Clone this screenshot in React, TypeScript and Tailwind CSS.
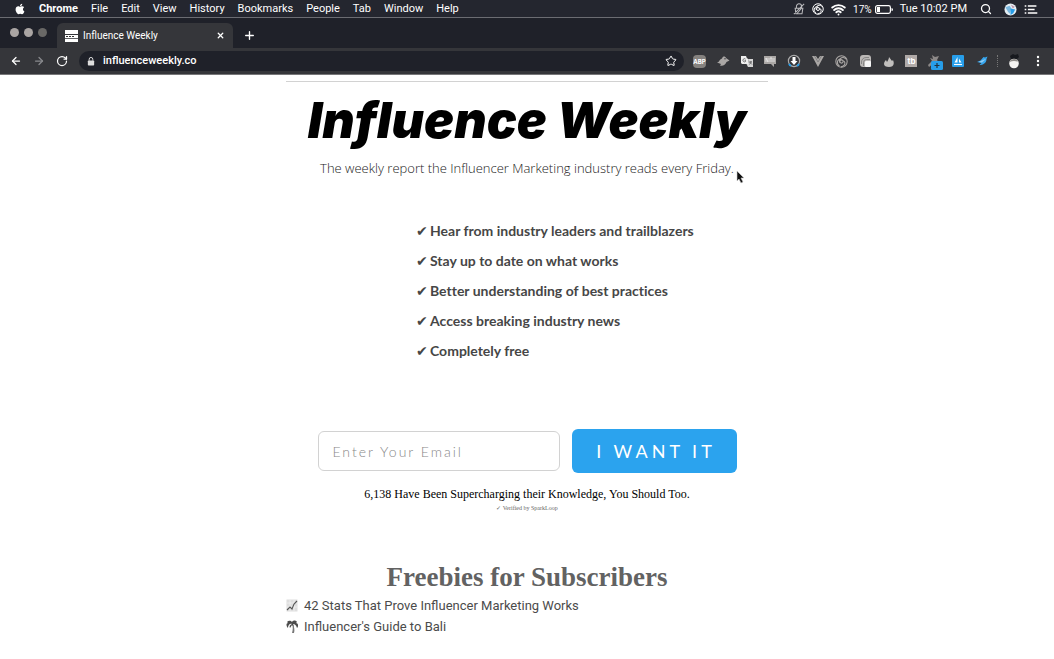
import type { ReactNode } from 'react';
import { FaApple } from 'react-icons/fa';
import { ArrowLeft, ArrowRight, RotateCw, Plus, X, Search, Star, Wifi } from 'lucide-react';

const menus = ['File', 'Edit', 'View', 'History', 'Bookmarks', 'People', 'Tab', 'Window', 'Help'];
const benefits = [
  'Hear from industry leaders and trailblazers',
  'Stay up to date on what works',
  'Better understanding of best practices',
  'Access breaking industry news',
  'Completely free',
];

function Knot({ className }: { className: string }) {
  return (
    <svg viewBox="0 0 16 16" className={className} fill="none" stroke="currentColor" strokeWidth="1.3" aria-hidden="true">
      <circle cx="8" cy="8" r="7" />
      <path d="M8 5.500c-2-1-4.500 0-5 2.500-.4 2 .5 4 2.500 5.500" />
      <path d="M5.800 9.200c-1-2-.2-4.800 2.200-5.800 2-.8 4.200-.2 5.800 1.800" />
      <path d="M10.200 7c2.200 1 2.600 3.600 1.200 5.400-1 1.300-2.400 2-4 2.200" />
      <circle cx="8" cy="8" r="2" />
    </svg>
  );
}

function MenuBar() {
  return (
    <header className="flex h-[17px] items-center justify-between bg-[#24262f] pt-px pr-4 pl-[14px] font-[Roboto] text-[11px] text-white">
      <nav className="flex items-center gap-[13px]" aria-label="Application menu">
        <FaApple className="mb-px size-3" aria-hidden="true" />
        <a href="#chrome" className="font-bold">Chrome</a>
        {menus.map((m) => (
          <a key={m} href={'#' + m.toLowerCase()}>{m}</a>
        ))}
      </nav>
      <div className="flex items-center gap-[7px]">
        <svg viewBox="0 0 14 14" className="size-3" fill="none" stroke="#b9b9bc" strokeWidth="1.200" aria-hidden="true">
          <path d="M4 6V4a3 3 0 0 1 6 0v2M2.500 6h9l-1 6.500h-7zM1 13 13 1M5 12l5-6" />
        </svg>
        <Knot className="size-3" />
        <Wifi className="size-[15px]" strokeWidth={3} aria-hidden="true" />
        <div className="flex items-center gap-[3px]">
          <span className="text-[10px]">17%</span>
          <svg viewBox="0 0 18 9" className="h-[9px] w-[18px]" aria-hidden="true">
            <rect x=".6" y=".6" width="14.800" height="7.800" rx="1.800" fill="none" stroke="#fff" strokeWidth="1.200" />
            <rect x="2" y="2" width="3" height="5" fill="#fff" />
            <path d="M16.500 3v3a1.500 1.500 0 0 0 0-3" fill="#fff" />
          </svg>
        </div>
        <time>Tue 10:02 PM</time>
        <Search className="ml-[6px] size-3" strokeWidth={2.500} aria-hidden="true" />
        <svg viewBox="0 0 14 14" className="ml-[5px] size-[13px]" aria-hidden="true">
          <circle cx="7" cy="7" r="6.500" fill="#e4edf2" />
          <path d="M1.500 4.500 6 3l2 3-2 5.500L4 9z" fill="#7ab7df" />
          <path d="m7 6 5 1-2 4-3 2z" fill="#269de8" />
          <path d="m7.500 2 4 2-2 2z" fill="#bd95ad" />
        </svg>
        <svg viewBox="0 0 14 10" className="h-[9px] w-[14px]" stroke="#fff" strokeWidth="1.700" aria-hidden="true">
          <path d="M0 1.200h1.800M3.500 1.200H13M0 5h1.800M3.500 5H11M0 8.800h1.800M3.500 8.800H14" />
        </svg>
      </div>
    </header>
  );
}

function TabStrip() {
  return (
    <div className="flex h-[31px] items-end border-t border-[#6b6c72] bg-[#1f2129] pl-[10px] text-white">
      <div className="mb-[11px] flex gap-[5px] self-end">
        <span className="size-[9px] rounded-full bg-[#aaa5a3]" />
        <span className="size-[9px] rounded-full bg-[#aaa5a3]" />
        <span className="size-[9px] rounded-full bg-[#696866]" />
      </div>
      <div className="ml-[10px] flex h-[25px] w-44 items-center rounded-t-md bg-[#35363a] pr-2 pl-2">
        <svg viewBox="0 0 13 12" className="h-3 w-[13px]" aria-hidden="true">
          <rect width="13" height="12" fill="#fff" />
          <path d="M0 4.500h13" stroke="#35363a" strokeWidth="1" />
          <path d="M1 6.500h9" stroke="#333" strokeWidth="1" strokeDasharray="2 1" />
          <path d="M0 8.500h13" stroke="#35363a" strokeWidth=".8" />
        </svg>
        <span className="ml-[5px] flex-1 font-[Roboto] text-[10px]">Influence Weekly</span>
        <button type="button" aria-label="Close tab"><X className="size-[9px]" strokeWidth={3.500} /></button>
      </div>
      <button type="button" aria-label="New tab" className="mb-[6px] ml-[10px]"><Plus className="size-[13px]" strokeWidth={2.500} /></button>
    </div>
  );
}

function Ext({ label, children }: { label: string; children: ReactNode }) {
  return (
    <button type="button" aria-label={label} className="size-[14px]">
      <svg viewBox="0 0 14 14" className="size-[14px] overflow-visible" fill="#aaa7a5" aria-hidden="true">{children}</svg>
    </button>
  );
}

function Extensions() {
  return (
    <div className="flex w-[296px] items-center justify-between">
      <button type="button" className="flex size-[13px] items-center justify-center rounded-sm bg-[#85827f] text-[6px] font-bold text-white">ABP</button>
      <Ext label="Bird"><path d="M1 8.500c1 0 2-1 2.500-2C4.500 5 6 5 6.500 3.500 7 2 9.500 2 10 4l3.500 2.500L10.500 8c-1 3-4 4.500-6.500 3.500L5 10z" /><circle cx="9" cy="4.800" r=".7" fill="#35363a" /></Ext>
      <Ext label="Translate"><path d="M1 2h5l1 2.500h1L9 10H2L1 9z" fill="#eee" /><path d="M8 5h5v8H8l-1.500-3H9z" fill="#d5d5d5" /><path d="M5.500 5a1.600 1.600 0 1 0 0 2.500V6.300H4.500M9 8h3M11 7c0 2-1 2.500-1.500 3.500m.5-2 2 2" fill="none" stroke="#58585a" strokeWidth=".8" /></Ext>
      <Ext label="Notes"><path d="M1 2h12v8h-2v3L8 10H1z" /><path d="M3 4v4m0-4 2 4V4m2 4V4h2v4m2-4v4" fill="none" stroke="#e8e8e8" strokeWidth=".9" /></Ext>
      <Ext label="Download"><circle cx="7" cy="7" r="5.600" fill="none" stroke="#aaa" strokeWidth="1.200" /><path d="M2 10a6 6 0 0 0 2 2M12 10a6 6 0 0 1-2 2" fill="none" stroke="#279eea" strokeWidth="2" /><path d="M5.500 3h3v4h2L7 11 3.500 7h2z" fill="#fff" /></Ext>
      <Ext label="Vue"><path d="M1 2h4l2 3 2-3h4L7 13z" /><path d="m3.500 2 3.500 6 3.500-6" fill="none" stroke="#77777a" strokeWidth=".8" /></Ext>
      <button type="button" aria-label="Knot"><Knot className="size-[13px] text-[#aaa7a5]" /></button>
      <Ext label="Layers"><rect x="2" y="1" width="11" height="12" rx="3" fill="#bbb8b6" /><rect x="7" y="7" width="6" height="6" rx="1" fill="#f5f5f5" /><path d="M5.500 12V8.500a3 3 0 0 1 3-3H12M3.500 10V8a4.500 4.500 0 0 1 4.500-4.500h3" fill="none" stroke="#777" strokeWidth=".8" /></Ext>
      <Ext label="Flame"><path d="M2 10c0-2 1-3 2-4l1 2c1-2 2-3 2-5l3 4 1-1c1 2 2 7-4 7-3 0-5-1-5-3z" fill="#c1bfbd" /></Ext>
      <button type="button" className="flex size-3 items-center justify-center bg-[#b0aaa8] text-[8px] leading-none font-bold text-white">tb</button>
      <Ext label="Wand"><path d="m5 1 3 2 4-1-2 4 2 3-4-1-6 5-1-2 4-4-2-3 3 1z" fill="#8d8988" /><rect x="4" y="7" width="12" height="9" rx="1.500" fill="#279eea" /><path d="M10 9v5M7.500 11.500h5" stroke="#22333e" strokeWidth="1.200" /></Ext>
      <Ext label="Sail"><rect x="1" y="1" width="12" height="12" rx="1" fill="#279eea" /><path d="M6.500 3v5.500H3.500zM8 4.500l2.500 4H8z" fill="#fff" /><path d="M3 10.500h8" stroke="#fff" strokeWidth="1.100" /></Ext>
      <Ext label="Swallow"><path d="m2 8 3.500-1.500L8.500 3l1.500.5 2.500-1-1 2.500c0 4-3.500 6-7 6l2-2z" fill="#36a6ef" /><path d="m3.500 8 4.500-2 3-1-4 3.500z" fill="#95cdf3" /></Ext>
    </div>
  );
}

function Toolbar() {
  return (
    <div className="flex h-[27px] items-center border-b border-[#777779] bg-[#35363a] pr-3 pl-[10px] text-white">
      <div className="flex gap-[11px]">
        <button type="button" aria-label="Back"><ArrowLeft className="size-3" strokeWidth={2.500} /></button>
        <button type="button" aria-label="Forward" className="text-[#88898d]"><ArrowRight className="size-3" strokeWidth={2.500} /></button>
        <button type="button" aria-label="Reload"><RotateCw className="size-3" strokeWidth={2.500} /></button>
      </div>
      <div className="ml-[11px] flex h-5 flex-1 items-center rounded-full bg-[#1f2129] pr-[7px] pl-2">
        <svg viewBox="0 0 8 10" className="h-[9px] w-2" aria-hidden="true">
          <rect x=".5" y="4" width="7" height="5.500" rx=".8" fill="#ddd" />
          <path d="M2 4V2.500a2 2 0 0 1 4 0V4" fill="none" stroke="#ddd" strokeWidth="1.100" />
        </svg>
        <input aria-label="Address" defaultValue="influenceweekly.co" className="ml-2 min-w-0 flex-1 bg-transparent font-[Roboto] text-[11px] font-medium outline-none" />
        <button type="button" aria-label="Bookmark"><Star className="size-3" strokeWidth={2} /></button>
      </div>
      <div className="ml-[9px] flex items-center">
        <Extensions />
        <span className="ml-2 h-3 border-l border-dotted border-[#777]" />
        <button type="button" aria-label="Profile" className="ml-[9px]">
          <svg viewBox="0 0 14 16" className="h-4 w-[14px]" aria-hidden="true">
            <path d="M3 3 6 1l2 1 3-1 1 3-2 2H4z" fill="#17191e" />
            <circle cx="7" cy="10.500" r="4.800" fill="#f4f3f1" /><path d="M2.500 9c1-4 8-4 9 0-3-1.500-6-1.500-9 0" fill="#8f8c88" />
          </svg>
        </button>
        <button type="button" aria-label="Menu" className="ml-[13px]">
          <svg viewBox="0 0 8 12" className="h-3 w-2" fill="#fff" aria-hidden="true">
            <circle cx="4" cy="2" r="1.200" /><circle cx="4" cy="6" r="1.200" /><circle cx="4" cy="10" r="1.200" />
          </svg>
        </button>
      </div>
    </div>
  );
}

function Signup() {
  return (
    <section className="mt-[63px] flex flex-col items-center">
      <form className="flex items-center gap-3" onSubmit={(e) => e.preventDefault()}>
        <input type="email" aria-label="Email" placeholder="Enter Your Email" className="h-10 w-[242px] rounded-md border border-[#d2d2d2] px-[14px] font-[Lato] text-[14px] font-light tracking-[2px] outline-none placeholder:text-[#888]" />
        <button type="submit" className="h-11 w-[165px] rounded-md bg-[#2ba3ee] pl-1 font-[Lato] text-[18px] tracking-[4px] text-white">I WANT IT</button>
      </form>
      <p className="mt-3 font-['Liberation_Serif',serif] text-[12px] leading-[18px] text-black">6,138 Have Been Supercharging their Knowledge, You Should Too.</p>
      <p className="font-['Liberation_Serif',serif] text-[6px] leading-[10px] text-[#666]">✓ Verified by SparkLoop</p>
    </section>
  );
}

function Freebies() {
  return (
    <section className="mt-[46px] text-[#4b4b4b]">
      <h2 className="text-center font-['Liberation_Serif',serif] text-[27px] leading-9 font-bold text-[#626262]">Freebies for Subscribers</h2>
      <ul className="font-[Roboto] text-[13px] leading-[21px]">
        <li className="flex items-center gap-[6px]">
          <svg viewBox="0 0 12 13" className="h-[13px] w-3" aria-hidden="true">
            <rect x=".5" y=".5" width="11" height="12" fill="#dedede" />
            <path d="M4 1v11M8 1v11M1 4h10M1 8h10" stroke="#f5f5f5" strokeWidth=".7" />
            <path d="m1 11 3-3 2 2 2-5 3-3" fill="none" stroke="#555" strokeWidth="1.100" />
          </svg>
          <a href="#stats">42 Stats That Prove Influencer Marketing Works</a>
        </li>
        <li className="flex items-center gap-[6px]">
          <svg viewBox="0 0 12 13" className="h-[13px] w-3" aria-hidden="true">
            <path d="M6 4c1 2 1 6 0 9h2c1-3 0-6-1-9z" fill="#777" />
            <path d="M6 4C4 3 2 5 2 8 0 6 0 3 2 3L1 2c2-2 4-1 5 0 1-2 4-2 5 0l-1 1c2 0 3 3 1 5-1-3-2-4-4-4l1 3-2-2-2 3c-1-2 0-3 2-4" fill="#4c4c4c" />
          </svg>
          <a href="#bali">Influencer's Guide to Bali</a>
        </li>
      </ul>
    </section>
  );
}

export default function App() {
  return (
    <div className="relative min-h-screen bg-white font-[Inter,sans-serif]">
      <MenuBar />
      <TabStrip />
      <Toolbar />
      <main className="mx-auto mt-[6px] max-w-[482px] border-t border-[#d2d2d2]">
        <h1 className="mt-[10px] text-center font-[Inter] text-[50px] leading-[56px] font-black whitespace-nowrap text-black italic">Influence Weekly</h1>
        <div className="relative mx-auto mt-[10px] w-fit">
          <p className="font-['Open_Sans'] text-[13px] leading-5 font-light whitespace-nowrap text-[#222]">The weekly report the Influencer Marketing industry reads every Friday.</p>
          <svg viewBox="0 0 10 14" className="absolute top-3 -right-3 h-[14px] w-[10px]" aria-hidden="true">
            <path d="M1 1v10l2-2 2 4 2-1-2-4h3z" fill="#111" stroke="#ccc" strokeWidth=".6" />
          </svg>
        </div>
        <ul className="mt-[38px] ml-[130px] font-[Lato] text-[14px] leading-[30px] font-bold text-[#464646] [font-variant-ligatures:none]">
          {benefits.map((b) => (
            <li key={b} className="flex items-center gap-[3px]">
              <span className="w-[11px] font-['DejaVu_Sans'] text-[14px] font-normal">✔</span>
              <span>{b}</span>
            </li>
          ))}
        </ul>
        <Signup />
        <Freebies />
      </main>
    </div>
  );
}
